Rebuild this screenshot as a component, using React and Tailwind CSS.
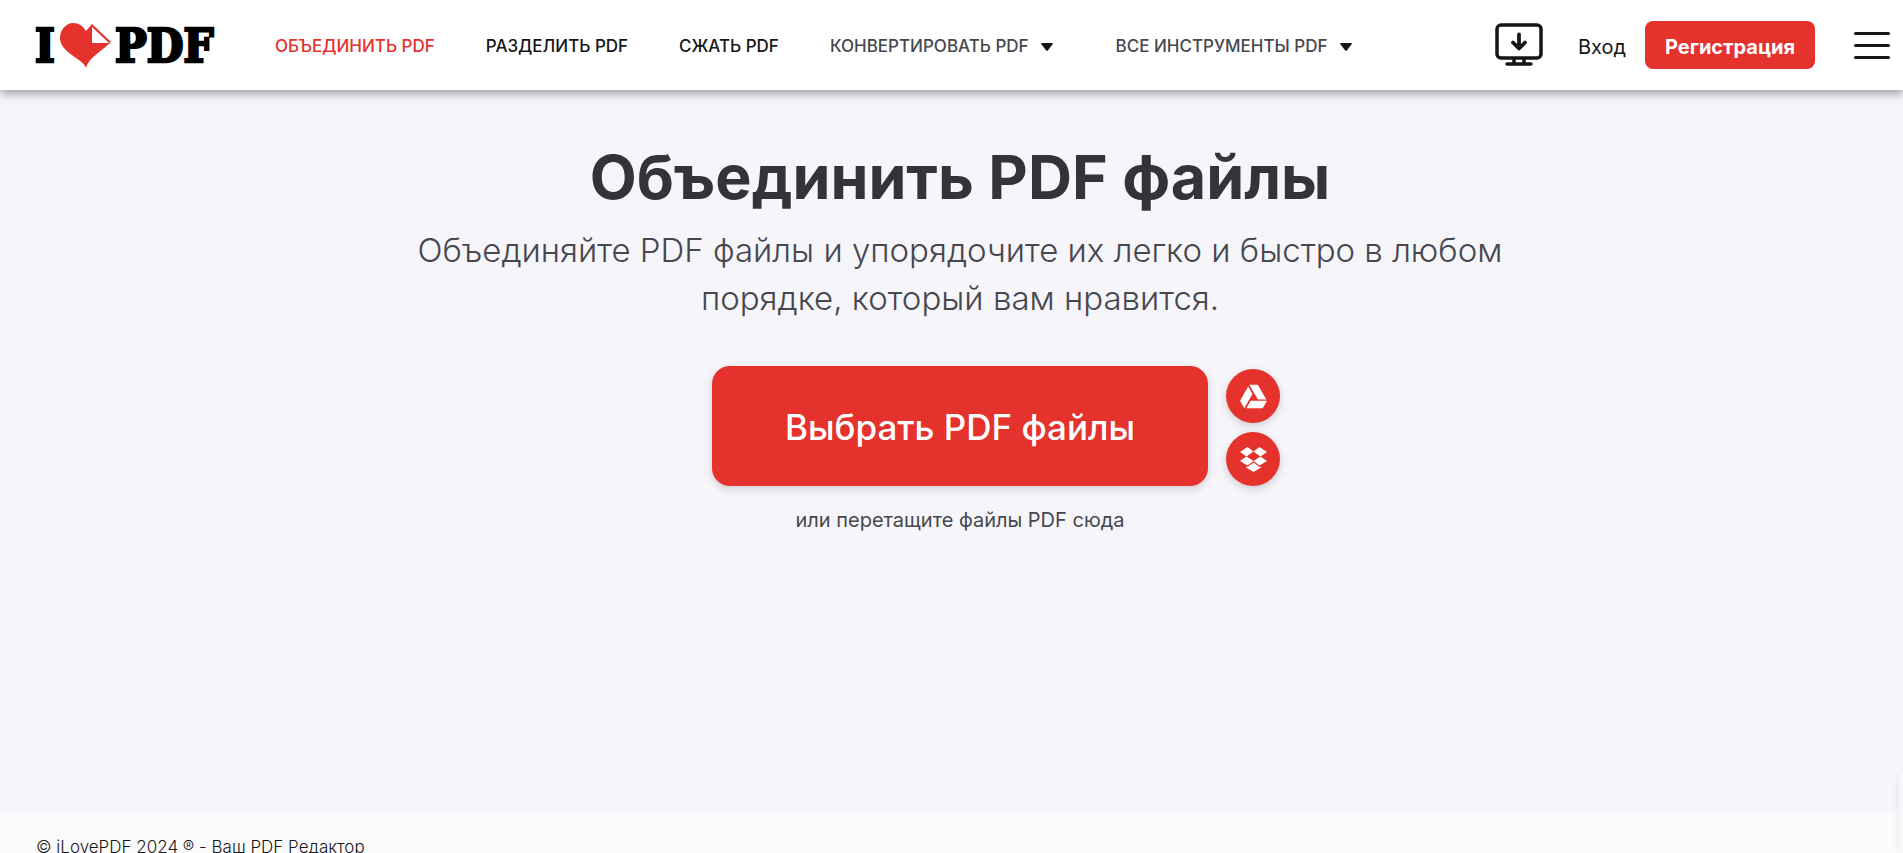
import { FaGoogleDrive } from 'react-icons/fa';

const NAV_LINKS = [
  { label: 'Объединить PDF', active: true },
  { label: 'Разделить PDF' },
  { label: 'Сжать PDF' },
];

const NAV_MENUS = ['Конвертировать PDF', 'Все инструменты PDF'];

const ROUND_BUTTON_CLASSES =
  'flex h-[54px] w-[54px] items-center justify-center rounded-full bg-[#e5322d] text-white shadow-[0_3px_8px_rgba(0,0,0,0.16)]';

function Logo() {
  return (
    <a href="#" aria-label="I love PDF" className="flex shrink-0 items-center">
      <svg width="184" height="66" viewBox="0 -8 184 66" className="block overflow-visible">
        <g
          fill="#000"
          stroke="#000"
          strokeWidth="2.5"
          fontSize="47"
          fontWeight="700"
          style={{ fontFamily: '"DejaVu Serif Condensed", "DejaVu Serif", serif' }}
        >
          <text x="-1" y="42">I</text>
          <text x="79" y="42">PDF</text>
        </g>
        <path
          d="M50 48C48 39 24 33 24 18C24 10 30 3 37 3C43 3 47 6 50 11L56 4L75 22C66 31 52 38 50 48Z"
          fill="#e5322d"
        />
        <path d="M56 7V23H73Z" fill="#fff" />
      </svg>
    </a>
  );
}

function Caret() {
  return (
    <svg width="12" height="8" viewBox="0 0 12 8" className="block" aria-hidden="true">
      <path d="M1 0H11Q12.500 0 11.600 1.200L7 7.200Q6 8.300 5 7.200L.4 1.200Q-.5 0 1 0Z" fill="#161616" />
    </svg>
  );
}

function DesktopIcon() {
  return (
    <svg
      width="48"
      height="44"
      viewBox="0 0 48 44"
      fill="none"
      stroke="#161616"
      strokeWidth="3.500"
      strokeLinecap="round"
      strokeLinejoin="round"
      className="block"
      aria-hidden="true"
    >
      <rect x="2" y="2" width="44" height="33" rx="4" />
      <path d="M24 11.500V25M18 19.500L24 25.500L30 19.500" strokeWidth="3.800" />
      <path d="M19 36V40M29 36V40M12 41H36" />
    </svg>
  );
}

function DropboxIcon() {
  return (
    <svg width="27" height="25" viewBox="0 0 27 25" fill="currentColor" className="block" aria-hidden="true">
      <path d="M7.500 0L13.500 4.500L6.500 9.500L0 5ZM19.500 0L27 5L20.500 9.500L13.500 4.500Z" />
      <path d="M6.500 9.500L13.500 14L7.500 18.500L0 14ZM20.500 9.500L27 14L19.500 18.500L13.500 14Z" />
      <path d="M13.500 15.500L19.500 20L21 19.500V20.500L13.500 25L6 20.500V19.500L7.500 20Z" />
    </svg>
  );
}

function Header() {
  return (
    <header className="relative z-10 flex h-[90px] shrink-0 items-center bg-white pr-[13px] pl-9 shadow-[0_3px_10px_rgba(0,0,0,0.4)]">
      <Logo />
      <nav className="ml-[55px] flex items-center gap-[51px] pt-1 text-[17px] font-medium whitespace-nowrap uppercase">
        {NAV_LINKS.map((link) => (
          <a key={link.label} href="#" className={link.active ? 'text-[#e5322d]' : 'text-[#161616]'}>
            {link.label}
          </a>
        ))}
        {NAV_MENUS.map((label) => (
          <button key={label} type="button" className="mr-3 flex items-center gap-3 text-[#47474f] uppercase">
            {label}
            <Caret />
          </button>
        ))}
      </nav>
      <div className="ml-auto flex items-center">
        <a href="#" aria-label="Скачать приложение">
          <DesktopIcon />
        </a>
        <a href="#" className="ml-[35px] pt-1 text-[20px] text-[#161616]">
          Вход
        </a>
        <a
          href="#"
          className="ml-[19px] flex h-12 w-[170px] items-center justify-center rounded-lg bg-[#e5322d] pt-1 text-[20px] font-bold text-white"
        >
          Регистрация
        </a>
        <button type="button" aria-label="Меню" className="ml-[39px] flex w-9 flex-col gap-[9px]">
          <span className="h-[3px] w-full rounded-full bg-[#161616]" />
          <span className="h-[3px] w-full rounded-full bg-[#161616]" />
          <span className="h-[3px] w-full rounded-full bg-[#161616]" />
        </button>
      </div>
    </header>
  );
}

export default function App() {
  return (
    <div className="flex h-screen flex-col overflow-hidden bg-[#f5f5fa] font-['Inter','Noto_Sans',sans-serif]">
      <Header />
      <main className="flex flex-1 flex-col items-center pt-12 pl-[17px] text-center">
        <h1 className="text-[61px] leading-[78px] font-bold text-[#33333b]">Объединить PDF файлы</h1>
        <p className="mt-[10px] max-w-[1120px] text-[33px] leading-[48px] font-light text-[#47474f]">
          Объединяйте PDF файлы и упорядочите их легко и быстро в любом порядке, который вам нравится.
        </p>
        <div className="mt-11 grid w-full grid-cols-[1fr_auto_1fr] items-end gap-[18px]">
          <button
            type="button"
            className="col-start-2 h-[120px] w-[496px] rounded-[18px] bg-[#e5322d] pt-[2px] text-[35px] font-medium text-white shadow-[0_3px_8px_rgba(0,0,0,0.16)]"
          >
            Выбрать PDF файлы
          </button>
          <div className="flex flex-col gap-[9px]">
            <button type="button" aria-label="Google Drive" className={ROUND_BUTTON_CLASSES}>
              <FaGoogleDrive size={27} />
            </button>
            <button type="button" aria-label="Dropbox" className={ROUND_BUTTON_CLASSES}>
              <DropboxIcon />
            </button>
          </div>
        </div>
        <p className="mt-5 text-[20px] leading-7 text-[#47474f]">или перетащите файлы PDF сюда</p>
      </main>
      <footer className="h-10 shrink-0 bg-[#fbfbfd] px-9 pt-5 text-[17px] leading-7 font-light text-[#161616]">
        © iLovePDF 2024 ® - Ваш PDF Редактор
      </footer>
      <div className="fixed right-0 bottom-0 h-20 w-1 rounded-tl bg-[#f7f7fa] shadow-[0_0_6px_rgba(0,0,0,0.1)]" />
    </div>
  );
}
